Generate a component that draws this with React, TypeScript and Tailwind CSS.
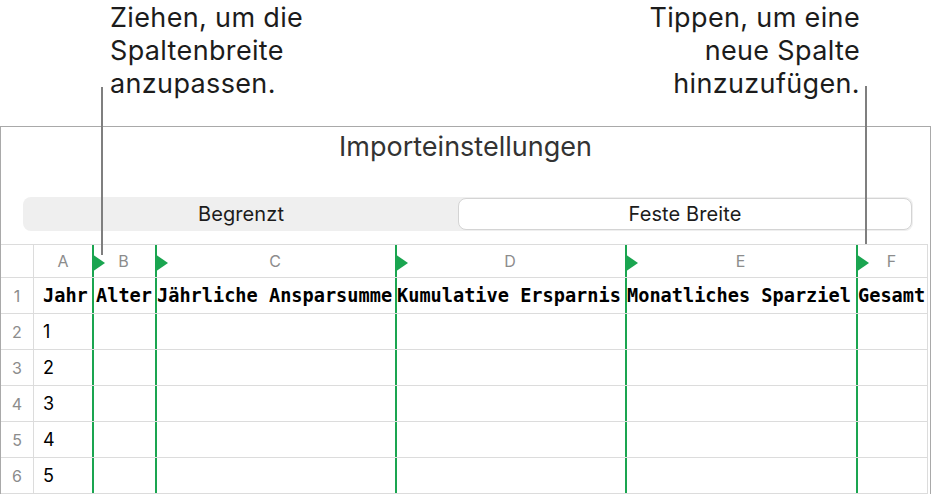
import React from "react";

const cols = [
  { key: "A", width: 58, label: "Jahr", pad: "pl-[9px]", marker: false },
  { key: "B", width: 63, label: "Alter", pad: "pl-[4px]", marker: true },
  { key: "C", width: 240, label: "Jährliche Ansparsumme", pad: "pl-[2px]", marker: true },
  { key: "D", width: 230, label: "Kumulative Ersparnis", pad: "pl-[2px]", marker: true },
  { key: "E", width: 231, label: "Monatliches Sparziel", pad: "pl-[2px]", marker: true },
  { key: "F", width: 71, label: "Gesamt", pad: "pl-[2px]", marker: true },
];

const dataRows = ["1", "2", "3", "4", "5"];

function Marker() {
  return (
    <svg
      className="absolute left-0 top-[9px]"
      width="13"
      height="18"
      viewBox="0 0 13 18"
    >
      <polygon points="0,0 13,9 0,18" fill="#1aa550" />
    </svg>
  );
}

function Cell({
  width,
  marker,
  children,
  className = "",
}: {
  width: number;
  marker: boolean;
  children?: React.ReactNode;
  className?: string;
}) {
  return (
    <div
      className={`relative shrink-0 h-full flex items-center ${className}`}
      style={{ width }}
    >
      {marker && <div className="absolute left-0 top-0 bottom-0 w-[2px] bg-[#1aa550]" />}
      {children}
    </div>
  );
}

export default function App() {
  const ui = { fontFamily: "Inter, 'Noto Sans', sans-serif" };
  const mono = { fontFamily: "'DejaVu Sans Mono', 'Liberation Mono', monospace" };

  return (
    <div className="relative w-[934px] h-[495px] bg-white overflow-hidden" style={ui}>
      {/* callout texts */}
      <div className="flex h-[126px] text-[27px] leading-[33px] text-[#1c1c1c] tracking-[0.35px]">
        <div className="pl-[110px] pt-[1px]">
          <div>Ziehen, um die</div>
          <div>Spaltenbreite</div>
          <div>anzupassen.</div>
        </div>
        <div className="ml-auto pr-[74px] pt-[1px] text-right">
          <div>Tippen, um eine</div>
          <div>neue Spalte</div>
          <div>hinzuzufügen.</div>
        </div>
      </div>

      {/* import settings panel */}
      <div className="w-[931px] border-l border-r border-t border-[#a9a9a9]">
        <div className="pt-[2px] h-[70px] text-center text-[27px] leading-[36px] text-[#333333]">
          Importeinstellungen
        </div>
        <div className="ml-[22px] mr-[17px] h-[34px] rounded-[8px] bg-[#efefef] flex p-[1px]">
          <div className="w-[434px] flex items-center justify-center text-[20px] tracking-[0.1px] text-[#1c1c1c]">
            Begrenzt
          </div>
          <div className="flex-1 rounded-[8px] bg-white border border-[#d4d4d4] flex items-center justify-center text-[20px] tracking-[0.1px] text-[#1c1c1c]">
            Feste Breite
          </div>
        </div>

        {/* table */}
        <div className="mt-[13px] w-[927px] border-t border-r border-[#dcdcdc]">
          {/* column letters */}
          <div className="flex h-[33px] border-b border-[#dcdcdc]">
            <div className="w-[33px] shrink-0 border-r border-[#dcdcdc]" />
            {cols.map((c) => (
              <Cell key={c.key} width={c.width} marker={c.marker}>
                {c.marker && <Marker />}
                <span className="w-full text-center text-[16px] text-[#8c8c8c]">{c.key}</span>
              </Cell>
            ))}
          </div>
          {/* header row */}
          <div className="flex h-[36px] border-b border-[#dcdcdc]">
            <div className="w-[33px] shrink-0 border-r border-[#dcdcdc] flex items-center justify-center text-[16px] text-[#8c8c8c]">
              1
            </div>
            {cols.map((c) => (
              <Cell key={c.key} width={c.width} marker={c.marker} className={c.pad}>
                <span
                  className="text-[18.6px] font-bold text-black whitespace-nowrap"
                  style={mono}
                >
                  {c.label}
                </span>
              </Cell>
            ))}
          </div>
          {/* data rows */}
          {dataRows.map((v, r) => (
            <div key={v} className="flex h-[36px] border-b border-[#dcdcdc]">
              <div className="w-[33px] shrink-0 border-r border-[#dcdcdc] flex items-center justify-center text-[16px] text-[#8c8c8c]">
                {r + 2}
              </div>
              {cols.map((c, i) => (
                <Cell key={c.key} width={c.width} marker={c.marker} className={c.pad}>
                  {i === 0 && <span className="text-[18px] text-black">{v}</span>}
                </Cell>
              ))}
            </div>
          ))}
        </div>
      </div>

      {/* callout leader lines */}
      <div className="absolute left-[101px] top-[87px] w-[2px] h-[168px] bg-[#7f7f7f]" />
      <div className="absolute left-[865px] top-[86px] w-[2px] h-[158px] bg-[#7f7f7f]" />
    </div>
  );
}
